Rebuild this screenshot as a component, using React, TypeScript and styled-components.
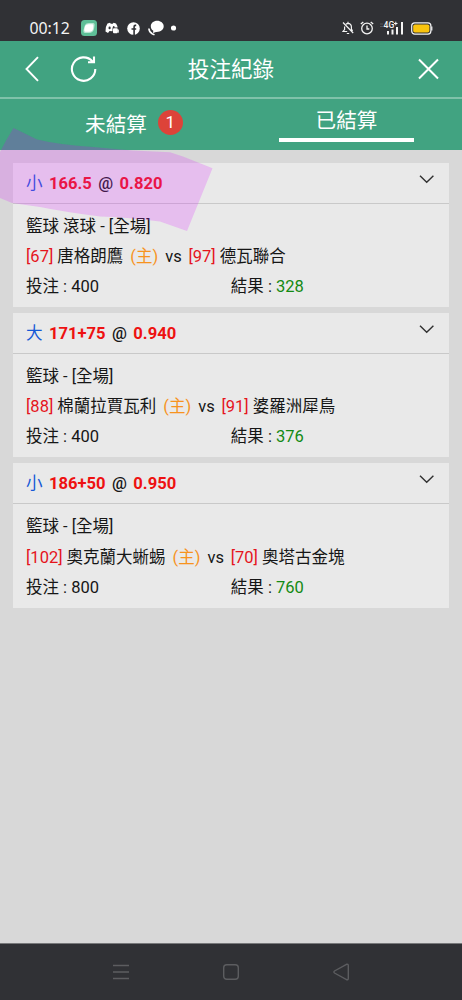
import React from 'react';
import styled, { createGlobalStyle } from 'styled-components';

const GlobalStyle = createGlobalStyle`
  * { box-sizing: border-box; }
  body { margin: 0; background: #d8d8d8; }
  svg { display: block; flex: none; }
`;

const Screen = styled.div`
  position: relative;
  display: flex;
  flex-direction: column;
  width: 462px;
  height: 1000px;
  overflow: hidden;
  background: #d8d8d8;
  color: #161616;
  font-family: Roboto, 'Noto Sans CJK TC', sans-serif;
  font-size: 16.5px;
`;

const StatusBar = styled.div`
  flex: none;
  display: flex;
  align-items: flex-end;
  justify-content: space-between;
  height: 41px;
  padding: 0 29px 3px 29.5px;
  background: #303135;
  color: #f4f4f4;
`;

const StatusGroup = styled.div<{ $gap: number }>`
  display: flex;
  align-items: center;
  height: 20px;
  gap: ${(p) => p.$gap}px;
`;

const Clock = styled.span`
  width: 44px;
  font-family: 'Noto Sans', sans-serif;
  font-size: 15.8px;
  line-height: 20px;
`;

const Header = styled.header`
  flex: none;
  display: grid;
  grid-template-columns: 24px 28px 1fr 22px;
  column-gap: 22px;
  align-items: center;
  height: 58px;
  padding: 0 22px 0 22px;
  border-bottom: 2px solid #7fc2aa;
  background: #41a381;
  color: #fff;
`;

const Title = styled.h1`
  margin: 0;
  padding: 2px 52px 0 0;
  text-align: center;
  font-size: 21.6px;
  font-weight: 400;
  line-height: 32px;
`;

const Tabs = styled.nav`
  flex: none;
  display: grid;
  grid-template-columns: 1fr 1fr;
  height: 51px;
  background: #41a381;
  color: #fff;
  font-size: 20.6px;
  line-height: 30px;
`;

const Tab = styled.div<{ $top: number; $indent?: number }>`
  display: flex;
  justify-content: center;
  align-items: flex-start;
  gap: 11px;
  padding-top: ${(p) => p.$top}px;
  padding-left: ${(p) => p.$indent ?? 0}px;
`;

const ActiveLabel = styled.span`
  width: 135px;
  height: 36px;
  border-bottom: 4px solid #fff;
  text-align: center;
`;

const Count = styled.span`
  width: 25px;
  height: 25px;
  border-radius: 50%;
  background: #dd4339;
  text-align: center;
  font-size: 17px;
  line-height: 24px;
`;

const List = styled.main`
  flex: 1;
  display: flex;
  flex-direction: column;
  gap: 6.2px;
  padding: 12.7px 13px 0 12.7px;
`;

const Card = styled.article`
  height: 144.2px;
  background: #e9e9e9;
`;

const CardHead = styled.div`
  display: flex;
  justify-content: space-between;
  height: 41px;
  padding: 5px 14.5px 0 13.3px;
  border-bottom: 1px solid #c9c9c9;
`;

const Pick = styled.div`
  display: flex;
  gap: 6.4px;
  padding-top: 1px;
  line-height: 30px;
  font-size: 16.6px;
  font-weight: 500;
`;

const Side = styled.span`
  color: #1558d6;
  font-weight: 400;
`;

const Odds = styled.span`
  color: #ee1111;
  font-weight: 700;
`;

const CardBody = styled.div`
  padding: 8px 13.3px 0;
  line-height: 30.1px;
  white-space: nowrap;
`;

const Teams = styled.div`
  display: flex;
`;

const Rank = styled.span`
  margin-right: 4px;
  color: #e5141c;
`;

const Home = styled.span`
  margin: 0 7px;
  color: #f7931e;
`;

const Versus = styled.span`
  margin-right: 6.7px;
`;

const Amounts = styled.div`
  display: grid;
  grid-template-columns: 1fr 1fr;
`;

const Win = styled.span`
  color: #138a13;
`;

const NavBar = styled.footer`
  flex: none;
  display: flex;
  justify-content: center;
  gap: 94px;
  height: 57px;
  padding-top: 19px;
  border-top: 1px solid #77787a;
  background: #303135;
`;

const Highlight = styled.svg`
  position: absolute;
  left: 0;
  top: 120px;
  pointer-events: none;
`;

interface Bet {
  side: string;
  line: string;
  odds: string;
  sport: string;
  homeRank: number;
  home: string;
  awayRank: number;
  away: string;
  stake: number;
  result: number;
}

const bets: Bet[] = [
  { side: '小', line: '166.5', odds: '0.820', sport: '籃球 滾球 - [全場]', homeRank: 67, home: '唐格朗鷹', awayRank: 97, away: '德瓦聯合', stake: 400, result: 328 },
  { side: '大', line: '171+75', odds: '0.940', sport: '籃球 - [全場]', homeRank: 88, home: '棉蘭拉賈瓦利', awayRank: 91, away: '婆羅洲犀鳥', stake: 400, result: 376 },
  { side: '小', line: '186+50', odds: '0.950', sport: '籃球 - [全場]', homeRank: 102, home: '奧克蘭大蜥蜴', awayRank: 70, away: '奧塔古金塊', stake: 800, result: 760 },
];

const AppNotice = () => (
  <svg width="16" height="16" viewBox="0 0 16 16">
    <rect width="16" height="16" rx="3.5" fill="#5fbf98" />
    <path d="M4 5Q5 3 8 3H12Q14 3 13.5 6L13 9Q12 13 8 13H4Q2 13 2.5 10Z" fill="#b8e5d2" />
    <path d="M4 6Q5 4.200 7.500 4.200H11.500Q12.800 4.200 12.300 7L12 9Q11.500 11.800 8.500 11.800H4.500Q3 11.800 3.400 9Z" fill="#fff" />
  </svg>
);

const GameChat = () => (
  <svg width="15" height="14" viewBox="0 0 15 14" fill="#fff">
    <path fillRule="evenodd" d="M2.500 2.500L5 1.700L5.800 2.700H7.800L8.500 1.700L11 2.500Q12.300 4.500 12.600 6.500H7.500V10.300L4.500 10L3 12L.5 10.500Q.3 5.500 2.500 2.500ZM4.600 5.600A1.100 1.300 0 1 0 4.600 8.200A1.100 1.300 0 1 0 4.600 5.600ZM8.700 5.100A1.100 1.100 0 0 0 7.900 6.500H9.600A1.100 1.100 0 0 0 8.700 5.100Z" />
    <rect x="8" y="7.300" width="4.800" height="5" rx="1" />
    <path d="M12.300 9.500L13.800 8.300V12L12.300 10.800Z" />
  </svg>
);

const SocialMark = () => (
  <svg width="13" height="13" viewBox="0 0 13 13">
    <circle cx="6.500" cy="6.500" r="6.300" fill="#fff" />
    <path d="M9.200 3.400H8.300Q7.100 3.400 7.100 4.700V13M4.500 7H9.200" fill="none" stroke="#303135" strokeWidth="1.600" />
  </svg>
);

const ChatBubbles = () => (
  <svg width="16" height="16" viewBox="0 0 16 16">
    <path d="M9.200 .8C5.500 .8 2.800 3.200 2.800 6.300C2.800 8.300 3.800 9.800 5.300 10.800L5 13L8 12C12.700 12.200 15.700 9.700 15.700 6.300C15.700 3.200 12.700 .8 9.200 .8Z" fill="#fff" />
    <path d="M.9 8.500Q1 12 4.200 13.800L6.500 14.900" fill="none" stroke="#fff" strokeWidth="1.600" />
  </svg>
);

const MutedBell = () => (
  <svg width="12" height="14" viewBox="0 0 12 14" fill="none" stroke="#f4f4f4" strokeWidth="1.200">
    <path d="M5.200 10.500H1L2.600 8.500V5.500M4 3.200Q5 2.300 6 2.300Q9.200 2.500 9.400 5.800V8.200L10.600 9.800M1 1.500L11.200 12M6 .8V2.300M4.800 12.500H7.200" />
  </svg>
);

const Alarm = () => (
  <svg width="14" height="14" viewBox="0 0 14 14" fill="none" stroke="#f4f4f4" strokeWidth="1.300">
    <circle cx="7" cy="7.500" r="5.300" />
    <path d="M7 4.500V8H9.300M.8 3L3.300 1M10.700 1L13.200 3" />
  </svg>
);

const Signal = () => (
  <svg width="25" height="16" viewBox="0 0 25 16" fill="#f4f4f4">
    <path d="M0 4H3M0 6.500H3" stroke="#55565a" />
    <text x="3.500" y="8" fontFamily="Roboto, sans-serif" fontSize="8.600" fontWeight="500">4G</text>
    <path d="M14 3.500H17.500M15.800 1.700V5.300" stroke="#f4f4f4" strokeWidth="1" />
    <path d="M7 11H9V14.500H7ZM11.500 9.500H13.500V14.500H11.500ZM16 7H18V14.500H16ZM21 2H23V14.500H21Z" />
  </svg>
);

const Battery = () => (
  <svg width="22" height="13" viewBox="0 0 22 13">
    <rect x=".7" y=".9" width="19.200" height="11.200" rx="3" fill="none" stroke="#f4f4f4" strokeWidth="1.200" />
    <rect x="2.200" y="2.400" width="16.200" height="8.200" rx="1.800" fill="#fac40e" />
    <path d="M20.800 4.500V8.500" stroke="#f4f4f4" strokeWidth="1.200" />
  </svg>
);

const BackIcon = () => (
  <svg width="24" height="28" viewBox="0 0 24 28" fill="none" stroke="#fff" strokeWidth="1.900">
    <path d="M16 2.200L4.500 14L16 25.800" />
  </svg>
);

const ReloadIcon = () => (
  <svg width="30" height="28" viewBox="0 0 30 28" fill="none" stroke="#fff" strokeWidth="2.100">
    <path d="M27.300 14A11.700 11.700 0 1 1 24.500 6.500M26 1.500V7.300H20" />
  </svg>
);

const CloseIcon = () => (
  <svg width="22" height="22" viewBox="0 0 22 22" stroke="#fff" strokeWidth="2">
    <path d="M1 1.500L20 20.500M20 1.500L1 20.500" />
  </svg>
);

const Chevron = () => (
  <svg width="16" height="22" viewBox="0 0 16 22" fill="none" stroke="#303030" strokeWidth="1.400">
    <path d="M1 7.800L7.700 14.300L14.400 7.800" />
  </svg>
);

const BetCard = ({ bet }: { bet: Bet }) => (
  <Card>
    <CardHead>
      <Pick>
        <Side>{bet.side}</Side>
        <Odds>{bet.line}</Odds>
        <span>@</span>
        <Odds>{bet.odds}</Odds>
      </Pick>
      <Chevron />
    </CardHead>
    <CardBody>
      <div>{bet.sport}</div>
      <Teams>
        <Rank>[{bet.homeRank}]</Rank>
        {bet.home}
        <Home>(主)</Home>
        <Versus>vs</Versus>
        <Rank>[{bet.awayRank}]</Rank>
        {bet.away}
      </Teams>
      <Amounts>
        <span>投注 : {bet.stake}</span>
        <span>結果 : <Win>{bet.result}</Win></span>
      </Amounts>
    </CardBody>
  </Card>
);

export default function App() {
  return (
    <Screen>
      <GlobalStyle />
      <StatusBar>
        <StatusGroup $gap={7.5}>
          <Clock>00:12</Clock>
          <AppNotice />
          <GameChat />
          <SocialMark />
          <ChatBubbles />
          <svg width="6" height="6"><circle cx="2.500" cy="3" r="2.600" fill="#fff" /></svg>
        </StatusGroup>
        <StatusGroup $gap={6}>
          <MutedBell />
          <Alarm />
          <Signal />
          <Battery />
        </StatusGroup>
      </StatusBar>
      <Header>
        <BackIcon />
        <ReloadIcon />
        <Title>投注紀錄</Title>
        <CloseIcon />
      </Header>
      <Tabs>
        <Tab $top={11} $indent={37}>
          <span>未結算</span>
          <Count>1</Count>
        </Tab>
        <Tab $top={7}>
          <ActiveLabel>已結算</ActiveLabel>
        </Tab>
      </Tabs>
      <List>
        {bets.map((bet) => (
          <BetCard key={bet.homeRank} bet={bet} />
        ))}
      </List>
      <NavBar>
        <svg width="16" height="18" viewBox="0 0 16 18" stroke="#5c5d60" strokeWidth="1.400">
          <path d="M0 2.500H16M0 9H16M0 15.500H16" />
        </svg>
        <svg width="16" height="18" viewBox="0 0 16 18" fill="none" stroke="#5c5d60" strokeWidth="1.400">
          <rect x=".7" y="1.700" width="14.600" height="14.600" rx="3" />
        </svg>
        <svg width="16" height="18" viewBox="0 0 16 18" fill="none" stroke="#5c5d60" strokeWidth="1.400">
          <path d="M13.500 1.300L1.500 8Q.3 9 1.500 10L13.500 16.700Q15.300 17 15.300 15.500V2.500Q15.300 1 13.500 1.300Z" />
        </svg>
      </NavBar>
      <Highlight width="216" height="112" viewBox="0 0 216 112">
        <path d="M13.500 8L37 19.500Q60 25 93 27L133 30.500L170 32.300L183 36.500L212.500 48.300L187 111L160 101.500Q125 97 100 96.500Q65 92 40 87L12 83L0 78V32Q6 20 13.500 8Z" fill="#da23ff" fillOpacity=".22" />
        <path d="M13.500 8L37 19.500Q60 25 93 27L120 30H1Q6 20 13.500 8Z" fill="#5a5a90" fillOpacity=".16" />
      </Highlight>
    </Screen>
  );
}
